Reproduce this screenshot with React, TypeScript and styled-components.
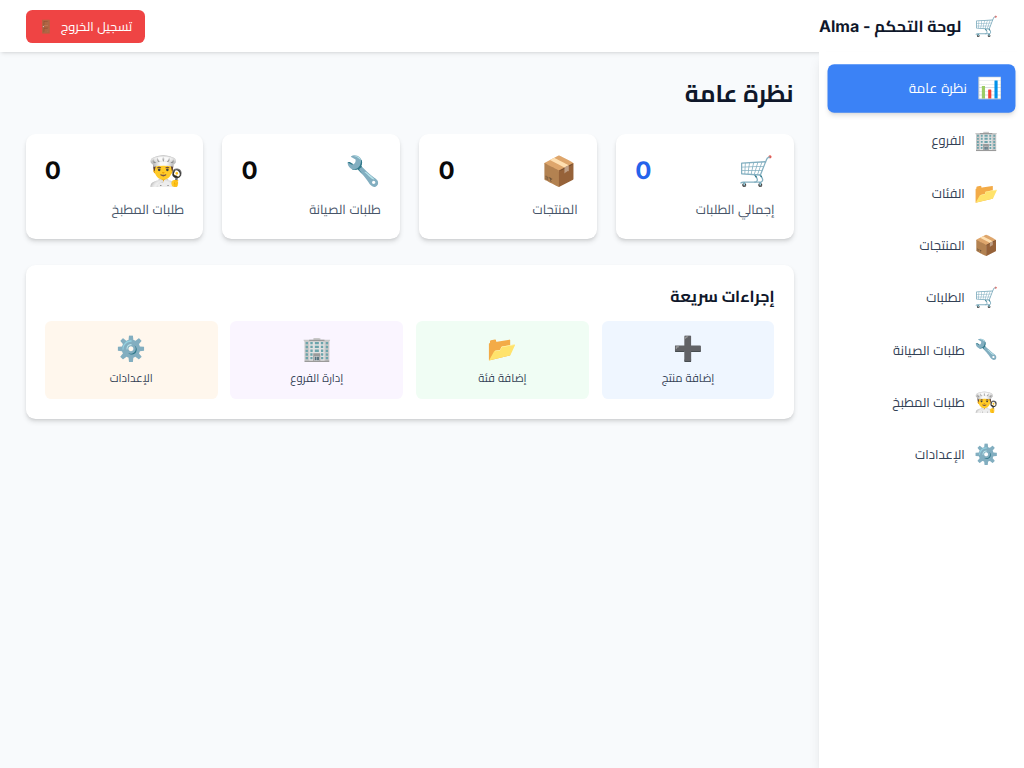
import React from 'react';
import styled, { createGlobalStyle, css } from 'styled-components';

const GlobalStyle = createGlobalStyle`
  *, *::before, *::after { box-sizing: border-box; }
  body {
    margin: 0;
    background: #f8fafc;
    color: #0a0a0a;
    font-family: Inter, Cairo, "Noto Sans Arabic", sans-serif;
    font-size: 12.95px;
    line-height: 1.5;
    text-rendering: geometricPrecision;
  }
  h1, h2, p { margin: 0; }
  button { font: inherit; border: 0; cursor: pointer; }
`;

const Page = styled.div`
  display: flex;
  flex-direction: column;
  height: 100vh;
  overflow: hidden;
`;

const Header = styled.header`
  display: flex;
  align-items: center;
  justify-content: space-between;
  flex: none;
  height: 52.4px;
  padding: 0 25.6px;
  background: #fff;
  box-shadow: 0 3.2px 4.8px -0.8px rgba(0, 0, 0, 0.1), 0 1.6px 3.2px -1.6px rgba(0, 0, 0, 0.1);
`;

const Brand = styled.div`
  display: flex;
  align-items: center;
  gap: 12.8px;
`;

const BrandIcon = styled.span`
  font-size: 19.5px;
  line-height: 26.4px;
`;

const BrandName = styled.h1`
  color: #0f172a;
  font-size: 16px;
  font-weight: 700;
  line-height: 22.4px;
  white-space: nowrap;
`;

const LogoutButton = styled.button`
  display: flex;
  align-items: center;
  gap: 6.4px;
  height: 32.8px;
  padding: 0 12.8px;
  border-radius: 6.4px;
  background: #ef4444;
  color: #fff;
  font-size: 12.8px;
`;

const Body = styled.div`
  display: flex;
  flex: 1;
  min-height: 0;
`;

const Sidebar = styled.nav`
  position: relative;
  display: flex;
  flex-direction: column;
  gap: 6.4px;
  flex: none;
  width: 204.8px;
  padding: 13.5px 12.8px;
  background: #fff;
  box-shadow: 0 8px 12px -2.4px rgba(0, 0, 0, 0.1), 0 3.2px 4.8px -3.2px rgba(0, 0, 0, 0.1);
`;

const NavItem = styled.button<{ $active?: boolean }>`
  display: flex;
  align-items: center;
  gap: 9.6px;
  flex: none;
  height: 45.9px;
  padding: 0 12.8px;
  border-radius: 6.4px;
  background: transparent;
  color: #334155;
  ${p =>
    p.$active &&
    css`
      background: #3b82f6;
      color: #fff;
      transform: translateY(-0.5px) scale(1.05);
      box-shadow: 0 3.2px 4.8px -0.8px rgba(0, 0, 0, 0.1), 0 1.6px 3.2px -1.6px rgba(0, 0, 0, 0.1);
    `}
`;

const NavIcon = styled.span`
  font-size: 19.5px;
  line-height: 25.6px;
`;

const Main = styled.main`
  flex: 1;
  min-width: 0;
  padding: 25.6px;
`;

const PageTitle = styled.h2`
  padding-top: 1px;
  margin-bottom: 25px;
  color: #0f172a;
  font-size: 24px;
  font-weight: 700;
  line-height: 30px;
`;

const Stats = styled.section`
  display: grid;
  grid-template-columns: repeat(4, 1fr);
  gap: 19.2px;
  margin-bottom: 26px;
`;

const Card = styled.article`
  padding: 19.2px;
  border-radius: 9.6px;
  background: #fff;
  box-shadow: 0 3.2px 4.8px -0.8px rgba(0, 0, 0, 0.1), 0 1.6px 3.2px -1.6px rgba(0, 0, 0, 0.1);
`;

const StatCard = styled(Card)`
  height: 104.8px;
`;

const StatTop = styled.div`
  display: flex;
  align-items: center;
  justify-content: space-between;
  height: 35px;
  margin-bottom: 12.8px;
`;

const StatIcon = styled.span`
  font-size: 28.8px;
  line-height: 32px;
`;

const StatValue = styled.span<{ $accent?: boolean }>`
  padding-top: 1.6px;
  color: ${p => (p.$accent ? '#2563eb' : '#0a0a0a')};
  font-size: 24px;
  font-weight: 700;
  line-height: 28.8px;
`;

const StatLabel = styled.p`
  color: #475569;
  line-height: 19.2px;
`;

const ActionsCard = styled(Card)`
  height: 153.8px;
`;

const ActionsTitle = styled.h2`
  margin-bottom: 12.8px;
  color: #0f172a;
  font-size: 16px;
  font-weight: 700;
  line-height: 24px;
`;

const Actions = styled.div`
  display: grid;
  grid-template-columns: repeat(4, 1fr);
  gap: 12.8px;
`;

const ActionButton = styled.button<{ $tint: string }>`
  display: flex;
  flex-direction: column;
  align-items: center;
  height: 78.4px;
  padding: 13.8px 12.8px 11.8px;
  border-radius: 6.4px;
  background: ${p => p.$tint};
  color: #334155;
  font-size: 11.2px;
  line-height: 16px;
`;

const ActionIcon = styled.span`
  margin-bottom: 6.4px;
  font-size: 24px;
  line-height: 28.8px;
`;

const navigation = [
  { icon: '📊', label: 'نظرة عامة' },
  { icon: '🏢', label: 'الفروع' },
  { icon: '📂', label: 'الفئات' },
  { icon: '📦', label: 'المنتجات' },
  { icon: '🛒', label: 'الطلبات' },
  { icon: '🔧', label: 'طلبات الصيانة' },
  { icon: '👨‍🍳', label: 'طلبات المطبخ' },
  { icon: '⚙️', label: 'الإعدادات' },
];

const stats = [
  { icon: '🛒', label: 'إجمالي الطلبات', value: 0 },
  { icon: '📦', label: 'المنتجات', value: 0 },
  { icon: '🔧', label: 'طلبات الصيانة', value: 0 },
  { icon: '👨‍🍳', label: 'طلبات المطبخ', value: 0 },
];

const actions = [
  { icon: '➕', label: 'إضافة منتج', tint: '#eff6ff' },
  { icon: '📂', label: 'إضافة فئة', tint: '#f0fdf4' },
  { icon: '🏢', label: 'إدارة الفروع', tint: '#faf5ff' },
  { icon: '⚙️', label: 'الإعدادات', tint: '#fff7ed' },
];

export default function App() {
  return (
    <Page dir="rtl" lang="ar">
      <GlobalStyle />
      <Header>
        <Brand>
          <BrandIcon>🛒</BrandIcon>
          <BrandName>لوحة التحكم - Alma</BrandName>
        </Brand>
        <LogoutButton>
          <span>تسجيل الخروج</span>
          <span>🚪</span>
        </LogoutButton>
      </Header>
      <Body>
        <Sidebar>
          {navigation.map((item, i) => (
            <NavItem key={item.label} $active={i === 0}>
              <NavIcon>{item.icon}</NavIcon>
              <span>{item.label}</span>
            </NavItem>
          ))}
        </Sidebar>
        <Main>
          <PageTitle>نظرة عامة</PageTitle>
          <Stats>
            {stats.map((stat, i) => (
              <StatCard key={stat.label}>
                <StatTop>
                  <StatIcon>{stat.icon}</StatIcon>
                  <StatValue $accent={i === 0}>{stat.value}</StatValue>
                </StatTop>
                <StatLabel>{stat.label}</StatLabel>
              </StatCard>
            ))}
          </Stats>
          <ActionsCard>
            <ActionsTitle>إجراءات سريعة</ActionsTitle>
            <Actions>
              {actions.map(action => (
                <ActionButton key={action.label} $tint={action.tint}>
                  <ActionIcon>{action.icon}</ActionIcon>
                  <span>{action.label}</span>
                </ActionButton>
              ))}
            </Actions>
          </ActionsCard>
        </Main>
      </Body>
    </Page>
  );
}
